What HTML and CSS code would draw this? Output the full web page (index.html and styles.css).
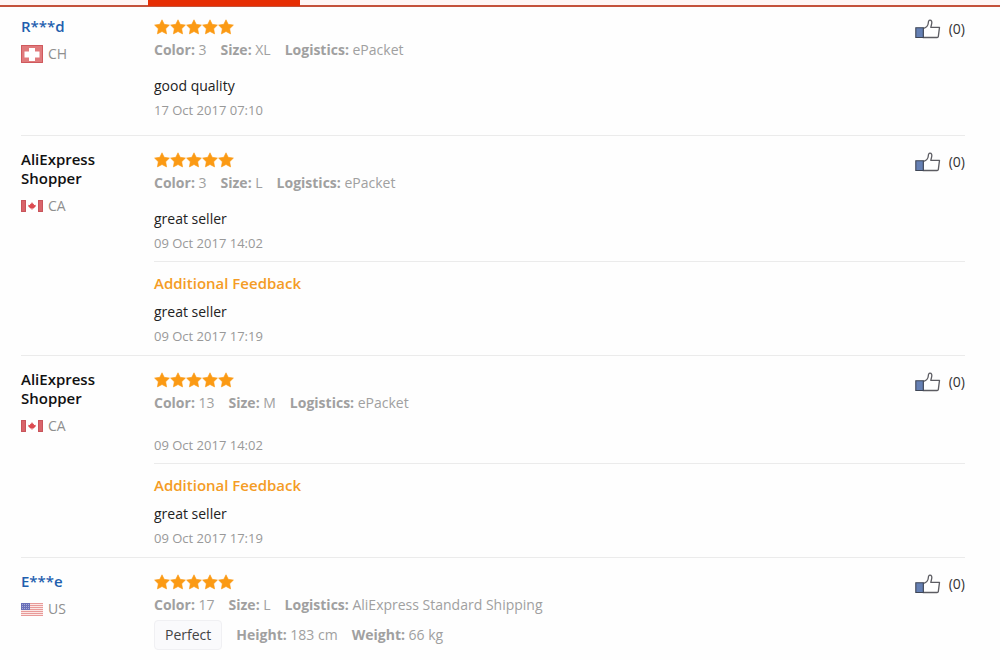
FILE: index.html
```
<!DOCTYPE html>
<html lang="en">

<head>
    <title>Feedback</title>
    <meta charset="utf-8">
    <meta name="viewport" content="width=device-width, initial-scale=1.0">
    <link rel="stylesheet" href="styles.css">
</head>

<body>

    <svg class="sprite" aria-hidden="true">
        <symbol id="star" viewBox="0 0 16 16">
            <path d="M8 .8l2.200 4.500 5.200.8-3.700 3.600.9 5.200L8 12.500l-4.600 2.400.9-5.200L.6 6.100l5.200-.8z" fill="#fb9a14" stroke="#fb9a14" stroke-width=".6" stroke-linejoin="round" />
        </symbol>
        <symbol id="stars" viewBox="0 0 80 16">
            <use href="#star" x="0" width="16" height="16" />
            <use href="#star" x="16" width="16" height="16" />
            <use href="#star" x="32" width="16" height="16" />
            <use href="#star" x="48" width="16" height="16" />
            <use href="#star" x="64" width="16" height="16" />
        </symbol>
        <symbol id="thumb" viewBox="0 0 26 20">
            <path d="M8 9.500c3-.5 5-2.500 5.300-5.500 0-1.500.5-2.800 1.700-2.800 1.600 0 2.100 1.600 1.700 3.400L15.800 8.300H24.500l-1.200 9.300c-.1.600-.5.900-1.200.9H8z" fill="#fff" stroke="#5c5c62" stroke-width="1.300" stroke-linejoin="round" />
            <path d="M.8 8.700h7.500v9.800H.8z" fill="#6580b4" stroke="#3f4656" stroke-width="1.100" />
        </symbol>
        <symbol id="flag-ch" viewBox="0 0 22 18">
            <path d="M0 0h22v18H0z" fill="#e07a7c" />
            <path d="M.5.500h21v17H.500z" fill="none" stroke="#c84c50" stroke-opacity=".7" />
            <path d="M8 3h6v3.500h4.500v6H14V16H8v-3.500H3.500v-6H8z" fill="#fff" />
        </symbol>
        <symbol id="flag-ca" viewBox="0 0 22 12">
            <path d="M0 0h22v12H0z" fill="#fff" />
            <path d="M0 0h5v12H0zM17 0h5v12h-5z" fill="#d9646a" />
            <path d="M.5.500h4v11h-4zM17.500.500h4v11h-4z" fill="none" stroke="#b8444b" stroke-opacity=".5" />
            <path d="M11 2l1 2 1-.3-.2 1.600L14.500 4.800l.3 1.400-2.300 2.300h-1.200V10h-.6V8.500H9.500L7.200 6.200l.3-1.400 1.700.5L9 3.700l1 .3z" fill="#dc4a50" />
        </symbol>
        <symbol id="flag-us" viewBox="0 0 22 13">
            <path d="M0 0h22v13H0z" fill="#fbe6e4" />
            <path d="M0 .5h22M0 2.500h22M0 4.500h22M0 6.500h22M0 8.500h22M0 10.500h22M0 12.500h22" stroke="#e89a99" />
            <path d="M0 0h9v7H0z" fill="#6a70b8" />
            <path d="M1 1.500h7M1 3.500h7M1 5.500h7" stroke="#a7abd8" stroke-dasharray="1 1" />
        </symbol>
    </svg>

    <header class="tabs">
        <div class="active-tab"></div>
    </header>

    <main class="feedback-list">

        <article class="feedback-item">
            <div class="user">
                <a class="name" href="#">R***d</a>
                <div class="country"><svg class="flag flag-ch"><use href="#flag-ch" /></svg>CH</div>
            </div>
            <div class="content">
                <section class="feedback">
                    <div class="review">
                        <svg class="stars" role="img" aria-label="5 stars"><use href="#stars" /></svg>
                        <div class="info">
                            <span><b>Color:</b> 3</span>
                            <span><b>Size:</b> XL</span>
                            <span><b>Logistics:</b> ePacket</span>
                        </div>
                        <p class="text">good quality</p>
                        <time class="date">17 Oct 2017 07:10</time>
                    </div>
                    <button class="helpful" aria-label="Helpful (0)"><svg class="thumb"><use href="#thumb" /></svg>(0)</button>
                </section>
            </div>
        </article>

        <article class="feedback-item">
            <div class="user">
                <span class="name">AliExpress Shopper</span>
                <div class="country"><svg class="flag flag-ca"><use href="#flag-ca" /></svg>CA</div>
            </div>
            <div class="content">
                <section class="feedback">
                    <div class="review">
                        <svg class="stars" role="img" aria-label="5 stars"><use href="#stars" /></svg>
                        <div class="info">
                            <span><b>Color:</b> 3</span>
                            <span><b>Size:</b> L</span>
                            <span><b>Logistics:</b> ePacket</span>
                        </div>
                        <p class="text">great seller</p>
                        <time class="date">09 Oct 2017 14:02</time>
                    </div>
                    <button class="helpful" aria-label="Helpful (0)"><svg class="thumb"><use href="#thumb" /></svg>(0)</button>
                </section>
                <section class="additional">
                    <h3>Additional Feedback</h3>
                    <p class="text">great seller</p>
                    <time class="date">09 Oct 2017 17:19</time>
                </section>
            </div>
        </article>

        <article class="feedback-item">
            <div class="user">
                <span class="name">AliExpress Shopper</span>
                <div class="country"><svg class="flag flag-ca"><use href="#flag-ca" /></svg>CA</div>
            </div>
            <div class="content">
                <section class="feedback">
                    <div class="review">
                        <svg class="stars" role="img" aria-label="5 stars"><use href="#stars" /></svg>
                        <div class="info">
                            <span><b>Color:</b> 13</span>
                            <span><b>Size:</b> M</span>
                            <span><b>Logistics:</b> ePacket</span>
                        </div>
                        <p class="text empty"></p>
                        <time class="date">09 Oct 2017 14:02</time>
                    </div>
                    <button class="helpful" aria-label="Helpful (0)"><svg class="thumb"><use href="#thumb" /></svg>(0)</button>
                </section>
                <section class="additional">
                    <h3>Additional Feedback</h3>
                    <p class="text">great seller</p>
                    <time class="date">09 Oct 2017 17:19</time>
                </section>
            </div>
        </article>

        <article class="feedback-item">
            <div class="user">
                <a class="name" href="#">E***e</a>
                <div class="country"><svg class="flag flag-us"><use href="#flag-us" /></svg>US</div>
            </div>
            <div class="content">
                <section class="feedback">
                    <div class="review">
                        <svg class="stars" role="img" aria-label="5 stars"><use href="#stars" /></svg>
                        <div class="info">
                            <span><b>Color:</b> 17</span>
                            <span><b>Size:</b> L</span>
                            <span><b>Logistics:</b> AliExpress Standard Shipping</span>
                        </div>
                        <div class="info fit">
                            <span class="tag">Perfect</span>
                            <span><b>Height:</b> 183 cm</span>
                            <span><b>Weight:</b> 66 kg</span>
                        </div>
                    </div>
                    <button class="helpful" aria-label="Helpful (0)"><svg class="thumb"><use href="#thumb" /></svg>(0)</button>
                </section>
            </div>
        </article>

    </main>

</body>

</html>
```
FILE: styles.css
```
* {
    box-sizing: border-box;
}

body {
    margin: 0;
    background-color: #fefefe;
    color: #222;
    font-family: "Open Sans", sans-serif;
    font-size: 14px;
    line-height: 24px;
}

.sprite {
    display: none;
}

.tabs {
    height: 7px;
    padding-left: 148px;
    background-color: #fff6f5;
    border-bottom: 2px solid #c4523b;
}

.active-tab {
    width: 152px;
    height: 6px;
    background-color: #e62e04;
}

.feedback-list {
    padding: 0 35px 0 21px;
    margin-top: -4px;
}

.feedback-item {
    display: flex;
    padding: 14px 0 7px;
    border-bottom: 1px solid #ebebeb;
}

.feedback-item:last-child {
    border-bottom: 0;
}

.user {
    width: 133px;
    padding-right: 40px;
    flex-shrink: 0;
}

.name {
    display: block;
    color: #111;
    font-size: 15px;
    font-weight: 600;
    line-height: 19px;
    text-decoration: none;
}

a.name {
    color: #1f5fae;
}

.country {
    display: flex;
    align-items: center;
    gap: 5px;
    margin-top: 8px;
    line-height: 20px;
    color: #8f8f8f;
}

.flag {
    width: 22px;
}

.flag-ch {
    height: 18px;
}

.flag-ca {
    height: 12px;
}

.flag-us {
    height: 13px;
}

.content {
    flex: 1;
}

.feedback {
    display: flex;
    justify-content: space-between;
    align-items: flex-start;
    padding-bottom: 6px;
}

.stars {
    display: block;
    width: 80px;
    height: 16px;
    margin: 2px 0;
}

.info {
    display: flex;
    align-items: center;
    gap: 14px;
    line-height: 26px;
    color: #a0a0a0;
}

.info b {
    font-weight: 700;
}

.fit {
    margin-top: 2px;
}

.tag {
    padding: 0 10px;
    border: 1px solid #f0f0f3;
    border-radius: 4px;
    background-color: #fafafc;
    color: #444;
    line-height: 28px;
}

.text {
    margin: 11px 0 0;
}

.empty {
    margin-top: 17px;
}

.date {
    display: block;
    color: #999;
    font-size: 13px;
}

.helpful {
    display: flex;
    align-items: center;
    gap: 8px;
    padding: 0;
    border: 0;
    background: none;
    color: #333;
    font: inherit;
}

.thumb {
    width: 26px;
    height: 20px;
}

.additional {
    padding-top: 9px;
    border-top: 1px solid #ebebeb;
}

.additional h3 {
    margin: 0;
    color: #f49c25;
    font-size: 15px;
    font-weight: 600;
}

.additional .text {
    margin-top: 5px;
}
```
